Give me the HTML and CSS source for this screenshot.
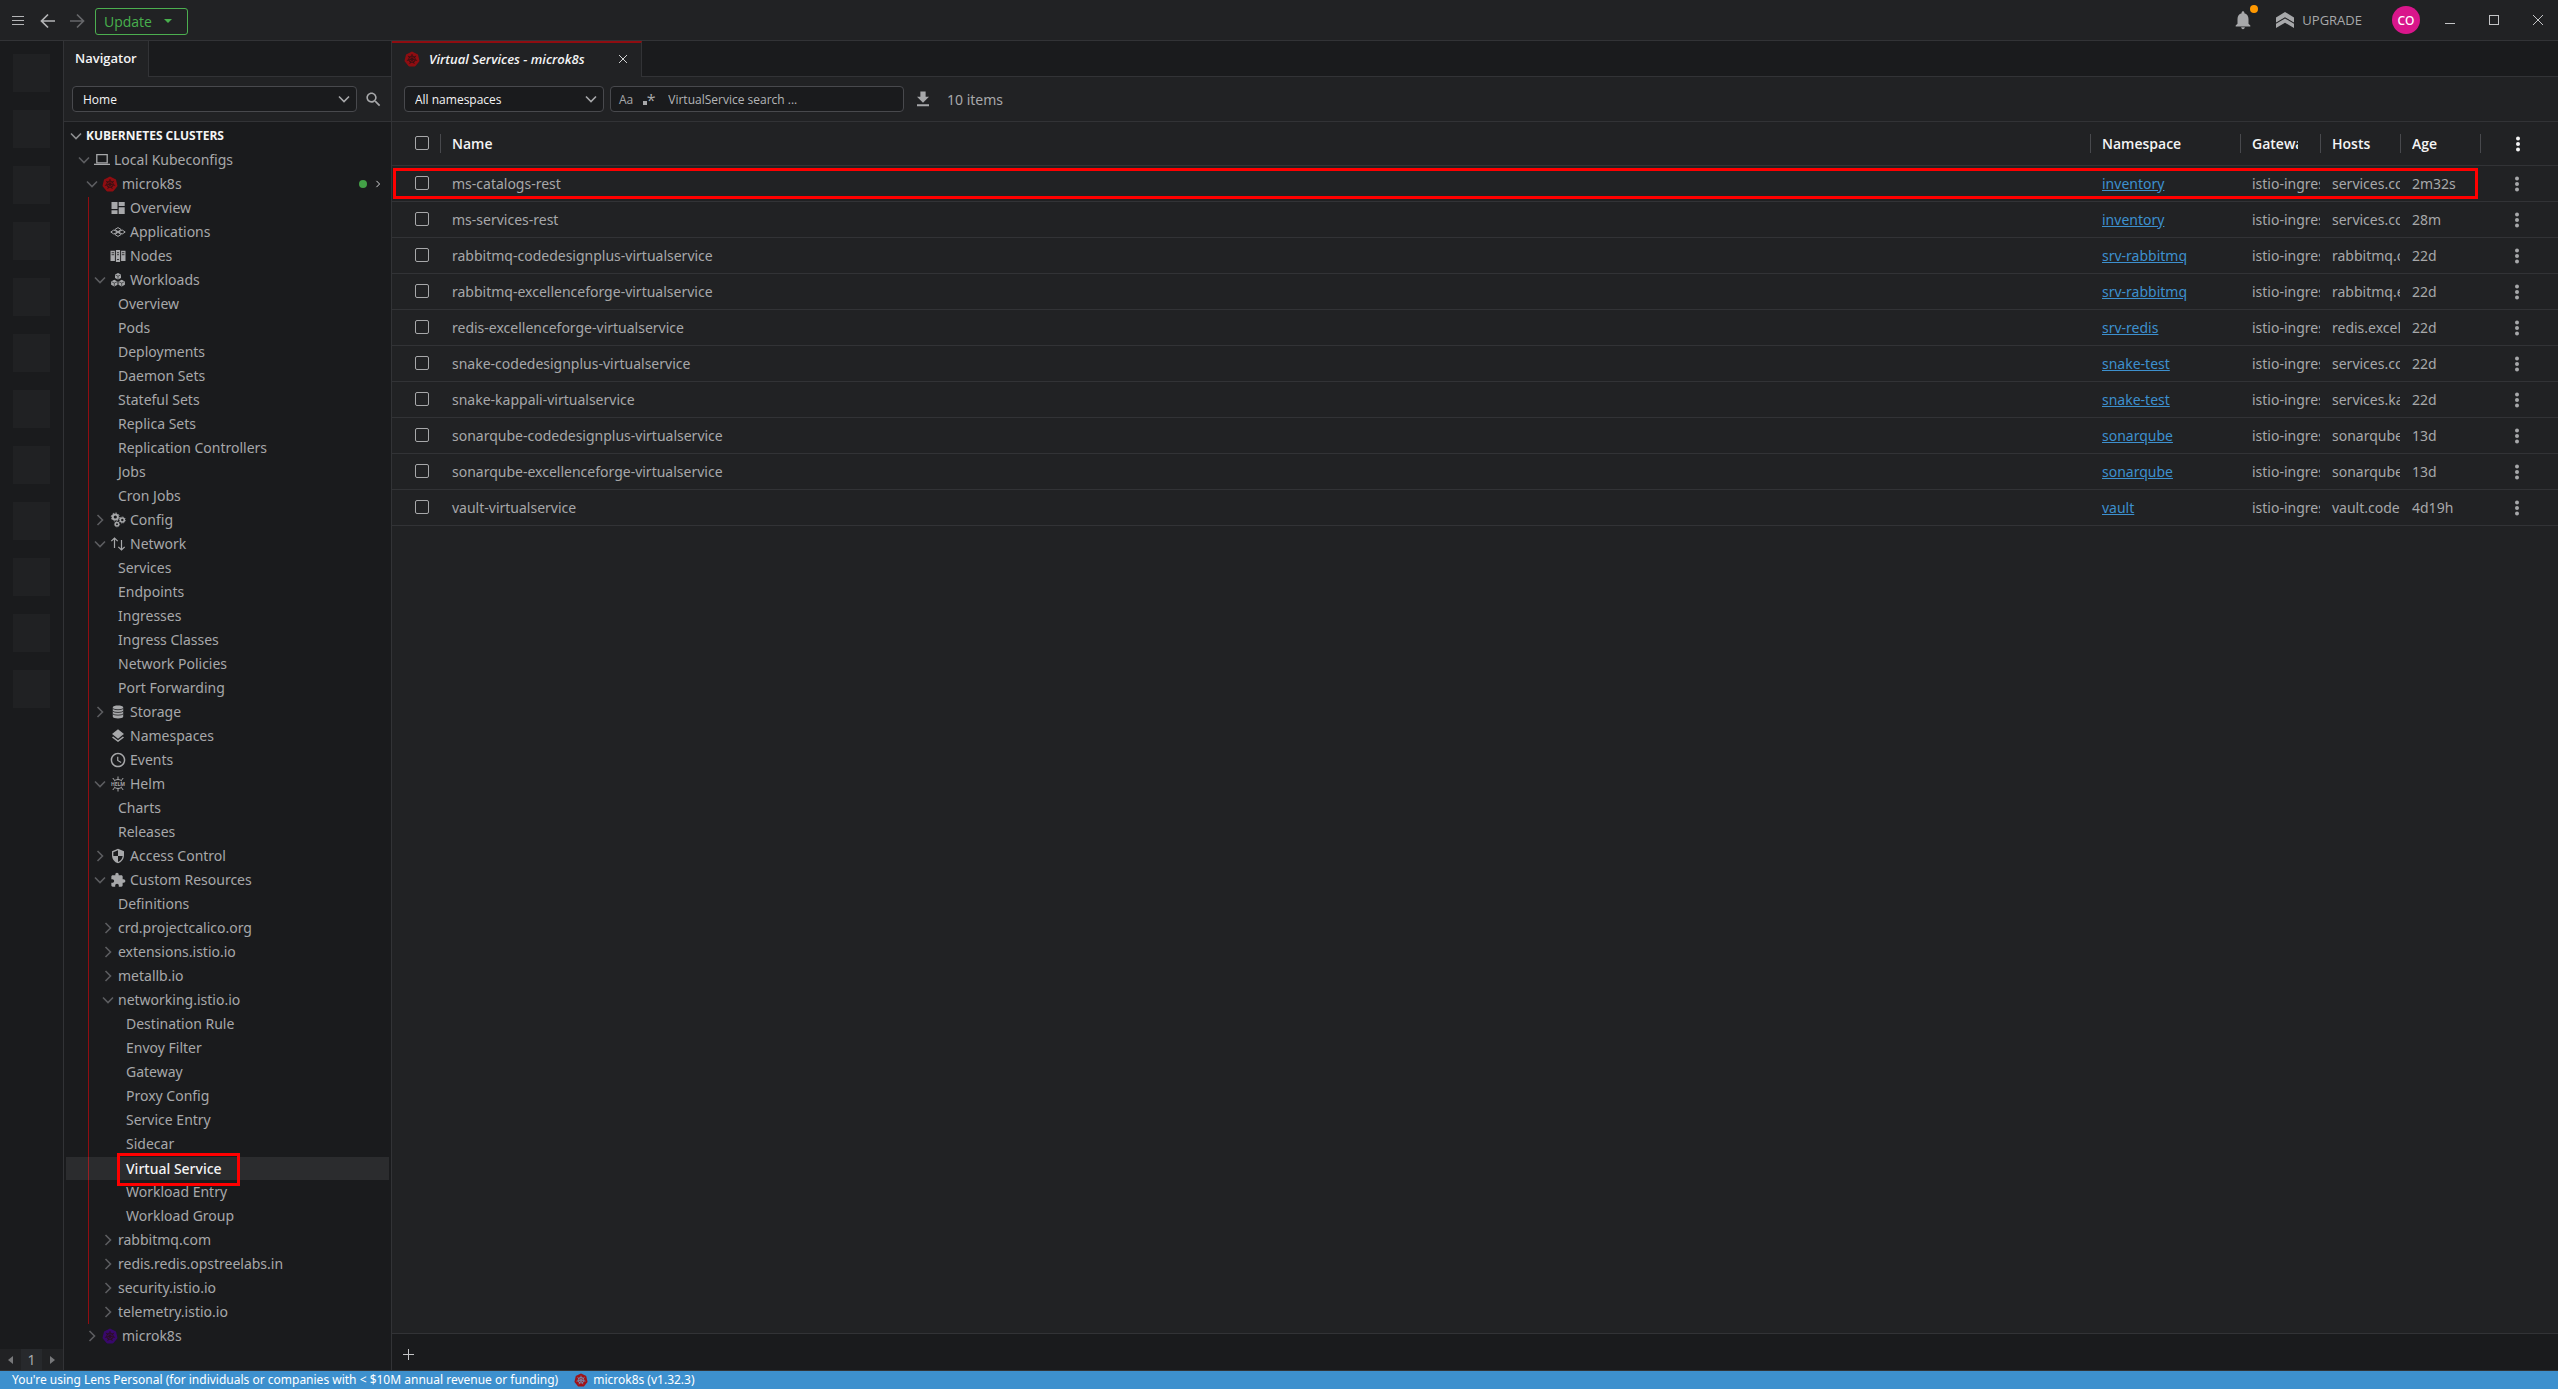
FILE: index.html
```html
<!DOCTYPE html>
<html lang="en">
<head>
    <meta charset="UTF-8">
    <meta name="viewport" content="width=device-width, initial-scale=1.0">
    <title>Virtual Services - microk8s</title>
    <link rel="stylesheet" href="styles.css">
</head>
<body>
    <!-- Icon sprite -->
    <svg class="sprite" aria-hidden="true">
        <symbol id="chevron-down" viewBox="0 0 16 16"><path d="M3 5.5l5 5 5-5" fill="none" stroke="currentColor" stroke-width="1.6"/></symbol>
        <symbol id="chevron-right" viewBox="0 0 16 16"><path d="M5.5 3l5 5-5 5" fill="none" stroke="currentColor" stroke-width="1.6"/></symbol>
        <symbol id="kube" viewBox="0 0 16 16">
            <path d="M8 .6l5.5 2.6c.3.2.5.4.6.8l1.3 5.6c.1.3 0 .7-.2.9l-3.700 4.500c-.2.3-.5.4-.9.400H5.400c-.4 0-.7-.1-.9-.4L.8 10.500c-.2-.2-.3-.6-.2-.9L1.900 4c.1-.4.3-.6.6-.8z" fill="currentColor"/>
            <g class="kube-wheel" fill="none" stroke-width=".8"><circle cx="8" cy="8.200" r="3.300"/><circle cx="8" cy="8.200" r=".8"/><path d="M8 7.400V3M8.600 7.700l3.500-2.800M8.800 8.400l4.300 1M8.400 8.900l1.900 4M7.600 8.900l-1.900 4M7.200 8.400l-4.300 1M7.400 7.700L3.900 4.900"/></g>
        </symbol>
        <symbol id="laptop" viewBox="0 0 16 16"><path d="M2.800 2.700h10.400v8.100H2.800z" fill="none" stroke="currentColor" stroke-width="1.300"/><path d="M0 11.700h16V13H0z" fill="currentColor"/></symbol>
        <symbol id="dashboard" viewBox="0 0 16 16"><path d="M1.500 2h6v7h-6zM8.700 2h6v4h-6zM1.500 10.200h6V14h-6zM8.700 7.200h6V14h-6z" fill="currentColor"/></symbol>
        <symbol id="apps" viewBox="0 0 16 16"><path d="M.8 8l3-2L8 8.200 12.200 6l3 2-3 2L8 7.800 3.800 10z" fill="none" stroke="currentColor"/><path d="M8 3.600l3.200 2L8 7.600l-3.200-2zM8 8.400l3.200 2L8 12.400l-3.200-2z" fill="none" stroke="currentColor"/></symbol>
        <symbol id="nodes" viewBox="0 0 16 16"><path d="M.5 2.700h4.700v10.200H.5zM5.700 2h4.600v12H5.700zM10.800 2.700h4.700v10.200h-4.700z" fill="currentColor"/><path d="M1.600 4.700h2.500M1.600 6.700h2.500M7 4.700h2M7 6.700h2M11.900 4.700h2.500M11.900 6.700h2.500M7 11.500h2M5.400 2v12M10.600 2v12" stroke="#1a1b1d" stroke-width=".8"/></symbol>
        <symbol id="workloads" viewBox="0 0 16 16"><path d="M8 1l3 1.600v3.300L8 7.600 5 5.900V2.600zM4.300 7.700l3.200 1.700v3.300l-3.200 1.700-3.200-1.700V9.400zM11.700 7.700l3.200 1.700v3.300l-3.200 1.700-3.200-1.700V9.400z" fill="currentColor"/><path d="M5.500 3L8 4.200 10.500 3M8 4.200v3M1.700 9.800l2.600 1.200L7 9.800M4.300 11v3M9 9.800l2.700 1.200 2.600-1.200M11.700 11v3" fill="none" stroke="#1a1b1d" stroke-width=".6"/></symbol>
        <symbol id="gears" viewBox="0 0 16 16"><g fill="none" stroke="currentColor"><circle cx="5.300" cy="5" r="2.600" stroke-width="2"/><circle cx="5.300" cy="5" r="4" stroke-width="1" stroke-dasharray="1.600 1.500"/><circle cx="12.300" cy="8" r="2" stroke-width="1.600"/><circle cx="12.300" cy="8" r="3" stroke-width=".9" stroke-dasharray="1.300 1"/><circle cx="7" cy="12.300" r="1.700" stroke-width="1.500"/><circle cx="7" cy="12.300" r="2.600" stroke-width=".8" stroke-dasharray="1.200 1"/></g></symbol>
        <symbol id="network" viewBox="0 0 16 16"><path d="M4.500 12V2M1.300 5.200L4.500 2l3.200 3.200M11.500 4v10M8.300 10.800l3.200 3.200 3.200-3.200" fill="none" stroke="currentColor" stroke-width="1.200"/></symbol>
        <symbol id="storage" viewBox="0 0 16 16"><path d="M2.800 3.300c0-2.300 10.400-2.300 10.400 0v9.400c0 2.300-10.400 2.300-10.400 0z" fill="currentColor"/><path d="M2.800 4.600c1.500 1.500 8.900 1.500 10.400 0M2.800 7.300c1.500 1.500 8.900 1.500 10.400 0M2.800 10c1.500 1.500 8.900 1.500 10.400 0" fill="none" stroke="#1a1b1d" stroke-width=".8"/></symbol>
        <symbol id="layers" viewBox="0 0 24 24"><path d="M11.990 18.540l-7.370-5.730L3 14.070l9 7 9-7-1.630-1.270zM12 16l7.360-5.730L21 9l-9-7-9 7 1.630 1.270z" fill="currentColor"/></symbol>
        <symbol id="clock" viewBox="0 0 24 24"><path d="M11.990 1C5.900 1 1 5.900 1 12s4.900 11 10.990 11C18.100 23 23 18.100 23 12S18.100 1 11.990 1zM12 20.700c-4.800 0-8.700-3.900-8.700-8.700s3.900-8.700 8.700-8.700 8.700 3.900 8.700 8.700-3.900 8.700-8.700 8.700zm.5-13.700H10.700v6l5.550 3.400.95-1.500-4.700-2.700z" fill="currentColor"/></symbol>
        <symbol id="helm" viewBox="0 0 16 16"><path d="M4 5.200c2-2.200 6-2.200 8 0M4 10.800c2 2.200 6 2.200 8 0M8 3.500V.5M8 12.500v3M4.700 4.500L2.800 2M11.300 4.500L13.200 2M4.700 11.500L2.800 14M11.300 11.500l1.900 2.500" fill="none" stroke="currentColor" stroke-width="1"/><text x="8" y="9.700" text-anchor="middle" class="helm-text">HELM</text></symbol>
        <symbol id="shield" viewBox="0 0 24 24"><path d="M12 1L3 5v6c0 5.550 3.840 10.740 9 12 5.160-1.260 9-6.450 9-12V5l-9-4zm0 10.990h7c-.53 4.120-3.280 7.790-7 8.940V12H5V6.300l7-3.110v8.800z" fill="currentColor"/></symbol>
        <symbol id="extension" viewBox="0 0 24 24"><path d="M20.500 11H19V7c0-1.100-.9-2-2-2h-4V3.500C13 2.120 11.880 1 10.500 1S8 2.120 8 3.500V5H4c-1.100 0-1.990.9-1.990 2v3.800H3.500c1.490 0 2.700 1.210 2.700 2.700s-1.210 2.700-2.700 2.700H2V20c0 1.100.9 2 2 2h3.800v-1.500c0-1.490 1.210-2.700 2.700-2.700 1.490 0 2.700 1.210 2.700 2.700V22H17c1.100 0 2-.9 2-2v-4h1.500c1.380 0 2.500-1.120 2.500-2.500S21.880 11 20.500 11z" fill="currentColor"/></symbol>
        <symbol id="search" viewBox="0 0 24 24"><path d="M15.500 14h-.79l-.28-.27C15.410 12.590 16 11.110 16 9.500 16 5.910 13.090 3 9.500 3S3 5.910 3 9.500 5.910 16 9.500 16c1.610 0 3.090-.59 4.230-1.570l.27.28v.79l5 4.990L20.490 19l-4.990-5zm-6 0C7.010 14 5 11.990 5 9.500S7.010 5 9.500 5 14 7.010 14 9.500 11.990 14 9.500 14z" fill="currentColor"/></symbol>
        <symbol id="arrow" viewBox="0 0 16 16"><path d="M15 8H1.500M8 1.500L1.500 8 8 14.500" fill="none" stroke="currentColor" stroke-width="1.700"/></symbol>
        <symbol id="bell" viewBox="0 0 24 24"><path d="M12 22c1.100 0 2-.9 2-2h-4c0 1.100.89 2 2 2zm6-6v-5c0-3.070-1.640-5.640-4.500-6.320V4c0-.83-.67-1.500-1.500-1.500s-1.500.67-1.500 1.500v.68C7.630 5.360 6 7.920 6 11v5l-2 2v1h16v-1l-2-2z" fill="currentColor"/></symbol>
        <symbol id="upgrade" viewBox="0 0 18 18"><path d="M9 1l9 5.500v5L9 6.200 0 11.500v-5zM9 7.500l9 5.300V17l-9-5.300L0 17v-4.200z" fill="currentColor"/><path d="M1 10.500V7L9 2l8 5v3.500L9 5.600z" fill="currentColor"/></symbol>
        <symbol id="download" viewBox="0 0 24 24"><path d="M20 9h-4.500V2h-7v7H4l8 8zM4 19v2.500h16V19z" fill="currentColor"/></symbol>
        <symbol id="kebab" viewBox="0 0 16 16"><g fill="currentColor"><circle cx="8" cy="2.500" r="2"/><circle cx="8" cy="8" r="2"/><circle cx="8" cy="13.500" r="2"/></g></symbol>
        <symbol id="close" viewBox="0 0 10 10"><path d="M0 0l10 10M10 0L0 10" fill="none" stroke="currentColor"/></symbol>
    </svg>

    <div class="app">
        <header class="titlebar">
            <button class="icon-btn menu-btn" aria-label="Menu"><span></span><span></span><span></span></button>
            <button class="icon-btn back-btn" aria-label="Back"><svg class="icon"><use href="#arrow"/></svg></button>
            <button class="icon-btn forward-btn" aria-label="Forward"><svg class="icon"><use href="#arrow"/></svg></button>
            <button class="update-btn">Update <span class="caret"></span></button>

            <div class="titlebar-right">
                <button class="icon-btn bell-btn" aria-label="Notifications"><svg class="icon"><use href="#bell"/></svg><span class="badge"></span></button>
                <button class="upgrade-btn"><svg class="icon"><use href="#upgrade"/></svg>UPGRADE</button>
                <button class="avatar">CO</button>
                <div class="window-controls">
                    <button class="icon-btn" aria-label="Minimize"><span class="minimize"></span></button>
                    <button class="icon-btn" aria-label="Maximize"><span class="maximize"></span></button>
                    <button class="icon-btn" aria-label="Close"><svg class="close-icon"><use href="#close"/></svg></button>
                </div>
            </div>
        </header>

        <div class="workspace">
            <aside class="hotbar">
                <div class="hotbar-items">
                    <span class="slot"></span><span class="slot"></span><span class="slot"></span><span class="slot"></span>
                    <span class="slot"></span><span class="slot"></span><span class="slot"></span><span class="slot"></span>
                    <span class="slot"></span><span class="slot"></span><span class="slot"></span><span class="slot"></span>
                </div>
                <div class="hotbar-pager">
                    <button class="icon-btn" aria-label="Previous"><span class="tri tri-left"></span></button>
                    <span class="page">1</span>
                    <button class="icon-btn" aria-label="Next"><span class="tri tri-right"></span></button>
                </div>
            </aside>

            <nav class="navigator">
                <div class="tabs"><a class="tab" href="#">Navigator</a></div>
                <div class="toolbar">
                    <div class="select nav-select">
                        <select aria-label="View"><option>Home</option></select>
                        <svg class="icon"><use href="#chevron-down"/></svg>
                    </div>
                    <button class="icon-btn search-btn" aria-label="Search"><svg class="icon"><use href="#search"/></svg></button>
                </div>

                <ul class="tree">
                    <li><a class="row l0" href="#"><svg class="icon toggle"><use href="#chevron-down"/></svg>KUBERNETES CLUSTERS</a></li>
                    <li><a class="row l1" href="#"><svg class="icon toggle"><use href="#chevron-down"/></svg><svg class="icon kind"><use href="#laptop"/></svg>Local Kubeconfigs</a></li>
                    <li>
                        <a class="row l2" href="#"><svg class="icon toggle"><use href="#chevron-down"/></svg><svg class="icon kind kube-red"><use href="#kube"/></svg>microk8s<span class="status-dot"></span><svg class="icon go"><use href="#chevron-right"/></svg></a>
                        <ul class="cluster">
                            <li><a class="row l3" href="#"><span class="toggle"></span><svg class="icon kind"><use href="#dashboard"/></svg>Overview</a></li>
                            <li><a class="row l3" href="#"><span class="toggle"></span><svg class="icon kind"><use href="#apps"/></svg>Applications</a></li>
                            <li><a class="row l3" href="#"><span class="toggle"></span><svg class="icon kind"><use href="#nodes"/></svg>Nodes</a></li>
                            <li><a class="row l3" href="#"><svg class="icon toggle"><use href="#chevron-down"/></svg><svg class="icon kind"><use href="#workloads"/></svg>Workloads</a></li>
                            <li><a class="row l4" href="#"><span class="toggle"></span>Overview</a></li>
                            <li><a class="row l4" href="#"><span class="toggle"></span>Pods</a></li>
                            <li><a class="row l4" href="#"><span class="toggle"></span>Deployments</a></li>
                            <li><a class="row l4" href="#"><span class="toggle"></span>Daemon Sets</a></li>
                            <li><a class="row l4" href="#"><span class="toggle"></span>Stateful Sets</a></li>
                            <li><a class="row l4" href="#"><span class="toggle"></span>Replica Sets</a></li>
                            <li><a class="row l4" href="#"><span class="toggle"></span>Replication Controllers</a></li>
                            <li><a class="row l4" href="#"><span class="toggle"></span>Jobs</a></li>
                            <li><a class="row l4" href="#"><span class="toggle"></span>Cron Jobs</a></li>
                            <li><a class="row l3" href="#"><svg class="icon toggle"><use href="#chevron-right"/></svg><svg class="icon kind"><use href="#gears"/></svg>Config</a></li>
                            <li><a class="row l3" href="#"><svg class="icon toggle"><use href="#chevron-down"/></svg><svg class="icon kind"><use href="#network"/></svg>Network</a></li>
                            <li><a class="row l4" href="#"><span class="toggle"></span>Services</a></li>
                            <li><a class="row l4" href="#"><span class="toggle"></span>Endpoints</a></li>
                            <li><a class="row l4" href="#"><span class="toggle"></span>Ingresses</a></li>
                            <li><a class="row l4" href="#"><span class="toggle"></span>Ingress Classes</a></li>
                            <li><a class="row l4" href="#"><span class="toggle"></span>Network Policies</a></li>
                            <li><a class="row l4" href="#"><span class="toggle"></span>Port Forwarding</a></li>
                            <li><a class="row l3" href="#"><svg class="icon toggle"><use href="#chevron-right"/></svg><svg class="icon kind"><use href="#storage"/></svg>Storage</a></li>
                            <li><a class="row l3" href="#"><span class="toggle"></span><svg class="icon kind"><use href="#layers"/></svg>Namespaces</a></li>
                            <li><a class="row l3" href="#"><span class="toggle"></span><svg class="icon kind"><use href="#clock"/></svg>Events</a></li>
                            <li><a class="row l3" href="#"><svg class="icon toggle"><use href="#chevron-down"/></svg><svg class="icon kind"><use href="#helm"/></svg>Helm</a></li>
                            <li><a class="row l4" href="#"><span class="toggle"></span>Charts</a></li>
                            <li><a class="row l4" href="#"><span class="toggle"></span>Releases</a></li>
                            <li><a class="row l3" href="#"><svg class="icon toggle"><use href="#chevron-right"/></svg><svg class="icon kind"><use href="#shield"/></svg>Access Control</a></li>
                            <li><a class="row l3" href="#"><svg class="icon toggle"><use href="#chevron-down"/></svg><svg class="icon kind"><use href="#extension"/></svg>Custom Resources</a></li>
                            <li><a class="row l4" href="#"><span class="toggle"></span>Definitions</a></li>
                            <li><a class="row l4" href="#"><svg class="icon toggle"><use href="#chevron-right"/></svg>crd.projectcalico.org</a></li>
                            <li><a class="row l4" href="#"><svg class="icon toggle"><use href="#chevron-right"/></svg>extensions.istio.io</a></li>
                            <li><a class="row l4" href="#"><svg class="icon toggle"><use href="#chevron-right"/></svg>metallb.io</a></li>
                            <li><a class="row l4" href="#"><svg class="icon toggle"><use href="#chevron-down"/></svg>networking.istio.io</a></li>
                            <li><a class="row l5" href="#"><span class="toggle"></span>Destination Rule</a></li>
                            <li><a class="row l5" href="#"><span class="toggle"></span>Envoy Filter</a></li>
                            <li><a class="row l5" href="#"><span class="toggle"></span>Gateway</a></li>
                            <li><a class="row l5" href="#"><span class="toggle"></span>Proxy Config</a></li>
                            <li><a class="row l5" href="#"><span class="toggle"></span>Service Entry</a></li>
                            <li><a class="row l5" href="#"><span class="toggle"></span>Sidecar</a></li>
                            <li class="selected"><a class="row l5" href="#" aria-current="page"><span class="toggle"></span>Virtual Service</a><span class="marker"></span></li>
                            <li><a class="row l5" href="#"><span class="toggle"></span>Workload Entry</a></li>
                            <li><a class="row l5" href="#"><span class="toggle"></span>Workload Group</a></li>
                            <li><a class="row l4" href="#"><svg class="icon toggle"><use href="#chevron-right"/></svg>rabbitmq.com</a></li>
                            <li><a class="row l4" href="#"><svg class="icon toggle"><use href="#chevron-right"/></svg>redis.redis.opstreelabs.in</a></li>
                            <li><a class="row l4" href="#"><svg class="icon toggle"><use href="#chevron-right"/></svg>security.istio.io</a></li>
                            <li><a class="row l4" href="#"><svg class="icon toggle"><use href="#chevron-right"/></svg>telemetry.istio.io</a></li>
                        </ul>
                    </li>
                    <li><a class="row l2" href="#"><svg class="icon toggle"><use href="#chevron-right"/></svg><svg class="icon kind kube-purple"><use href="#kube"/></svg>microk8s</a></li>
                </ul>
            </nav>

            <main class="main">
                <div class="tabs">
                    <div class="tab doc-tab">
                        <svg class="icon kube-red"><use href="#kube"/></svg>
                        <span class="doc-title">Virtual Services - microk8s</span>
                        <button class="icon-btn tab-close" aria-label="Close tab"><svg><use href="#close"/></svg></button>
                    </div>
                </div>
                <div class="toolbar main-toolbar">
                    <div class="select ns-select">
                        <select aria-label="Namespaces"><option>All namespaces</option></select>
                        <svg class="icon"><use href="#chevron-down"/></svg>
                    </div>
                    <div class="search-box">
                        <button class="icon-btn case-btn" aria-label="Match case">Aa</button>
                        <button class="icon-btn regex-btn" aria-label="Use regular expression"><span class="regex-dot"></span><span class="regex-star">*</span></button>
                        <input type="text" placeholder="VirtualService search ..." aria-label="VirtualService search">
                    </div>
                    <button class="icon-btn download-btn" aria-label="Download"><svg class="icon"><use href="#download"/></svg></button>
                    <span class="count">10 items</span>
                </div>

                <div class="table-wrap">
                    <table class="resources">
                        <colgroup>
                            <col class="col-check"><col><col class="col-ns"><col class="col-sm"><col class="col-sm"><col class="col-sm"><col class="col-menu">
                        </colgroup>
                        <thead>
                            <tr>
                                <th class="check"><input type="checkbox" aria-label="Select all"></th>
                                <th><div class="label"><span>Name</span></div></th>
                                <th><div class="label"><span>Namespace</span></div></th>
                                <th><div class="label"><span>Gateways</span></div></th>
                                <th><div class="label"><span>Hosts</span></div></th>
                                <th><div class="label"><span>Age</span></div></th>
                                <th class="menu"><div class="label"><button class="icon-btn" aria-label="Columns"><svg class="icon"><use href="#kebab"/></svg></button></div></th>
                            </tr>
                        </thead>
                        <tbody>
                            <tr><td class="check"><input type="checkbox" aria-label="ms-catalogs-rest"></td><td>ms-catalogs-rest</td><td><a href="#">inventory</a></td><td>istio-ingress</td><td>services.codedesignplus.com</td><td>2m32s</td><td class="menu"><button class="icon-btn" aria-label="Actions"><svg class="icon"><use href="#kebab"/></svg></button></td></tr>
                            <tr><td class="check"><input type="checkbox" aria-label="ms-services-rest"></td><td>ms-services-rest</td><td><a href="#">inventory</a></td><td>istio-ingress</td><td>services.codedesignplus.com</td><td>28m</td><td class="menu"><button class="icon-btn" aria-label="Actions"><svg class="icon"><use href="#kebab"/></svg></button></td></tr>
                            <tr><td class="check"><input type="checkbox" aria-label="rabbitmq-codedesignplus-virtualservice"></td><td>rabbitmq-codedesignplus-virtualservice</td><td><a href="#">srv-rabbitmq</a></td><td>istio-ingress</td><td>rabbitmq.codedesignplus.com</td><td>22d</td><td class="menu"><button class="icon-btn" aria-label="Actions"><svg class="icon"><use href="#kebab"/></svg></button></td></tr>
                            <tr><td class="check"><input type="checkbox" aria-label="rabbitmq-excellenceforge-virtualservice"></td><td>rabbitmq-excellenceforge-virtualservice</td><td><a href="#">srv-rabbitmq</a></td><td>istio-ingress</td><td>rabbitmq.excellenceforge.com</td><td>22d</td><td class="menu"><button class="icon-btn" aria-label="Actions"><svg class="icon"><use href="#kebab"/></svg></button></td></tr>
                            <tr><td class="check"><input type="checkbox" aria-label="redis-excellenceforge-virtualservice"></td><td>redis-excellenceforge-virtualservice</td><td><a href="#">srv-redis</a></td><td>istio-ingress</td><td>redis.excellenceforge.com</td><td>22d</td><td class="menu"><button class="icon-btn" aria-label="Actions"><svg class="icon"><use href="#kebab"/></svg></button></td></tr>
                            <tr><td class="check"><input type="checkbox" aria-label="snake-codedesignplus-virtualservice"></td><td>snake-codedesignplus-virtualservice</td><td><a href="#">snake-test</a></td><td>istio-ingress</td><td>services.codedesignplus.com</td><td>22d</td><td class="menu"><button class="icon-btn" aria-label="Actions"><svg class="icon"><use href="#kebab"/></svg></button></td></tr>
                            <tr><td class="check"><input type="checkbox" aria-label="snake-kappali-virtualservice"></td><td>snake-kappali-virtualservice</td><td><a href="#">snake-test</a></td><td>istio-ingress</td><td>services.kappali.com</td><td>22d</td><td class="menu"><button class="icon-btn" aria-label="Actions"><svg class="icon"><use href="#kebab"/></svg></button></td></tr>
                            <tr><td class="check"><input type="checkbox" aria-label="sonarqube-codedesignplus-virtualservice"></td><td>sonarqube-codedesignplus-virtualservice</td><td><a href="#">sonarqube</a></td><td>istio-ingress</td><td>sonarqube.codedesignplus.com</td><td>13d</td><td class="menu"><button class="icon-btn" aria-label="Actions"><svg class="icon"><use href="#kebab"/></svg></button></td></tr>
                            <tr><td class="check"><input type="checkbox" aria-label="sonarqube-excellenceforge-virtualservice"></td><td>sonarqube-excellenceforge-virtualservice</td><td><a href="#">sonarqube</a></td><td>istio-ingress</td><td>sonarqube.excellenceforge.com</td><td>13d</td><td class="menu"><button class="icon-btn" aria-label="Actions"><svg class="icon"><use href="#kebab"/></svg></button></td></tr>
                            <tr><td class="check"><input type="checkbox" aria-label="vault-virtualservice"></td><td>vault-virtualservice</td><td><a href="#">vault</a></td><td>istio-ingress</td><td>vault.codedesignplus.com</td><td>4d19h</td><td class="menu"><button class="icon-btn" aria-label="Actions"><svg class="icon"><use href="#kebab"/></svg></button></td></tr>
                        </tbody>
                    </table>
                    <span class="row-marker"></span>
                </div>

                <div class="dock"><button class="icon-btn add-btn" aria-label="New tab"></button></div>
            </main>
        </div>

        <footer class="statusbar">
            <span>You're using Lens Personal (for individuals or companies with &lt; $10M annual revenue or funding)</span>
            <span class="status-cluster"><svg class="icon kube-red"><use href="#kube"/></svg>microk8s (v1.32.3)</span>
        </footer>
    </div>
</body>
</html>
```
FILE: styles.css
```css
:root {
    --bg: #212224;
    --bg-dark: #1a1b1d;
    --border: #323336;
    --text: #a7a8aa;
    --text-bright: #f4f4f5;
    --blue: #3d90ce;
    --red: #8f0d11;
    --marker: #ff0000;
}

* {
    margin: 0;
    padding: 0;
    box-sizing: border-box;
}

body {
    font-family: 'Noto Sans', 'Open Sans', sans-serif;
    font-size: 14px;
    color: var(--text);
    background: var(--bg);
    overflow: hidden;
}

a {
    color: inherit;
    text-decoration: none;
}

ul {
    list-style: none;
}

button,
input,
select {
    font: inherit;
    color: inherit;
    background: none;
    border: none;
}

.sprite {
    display: none;
}

.icon {
    width: 16px;
    height: 16px;
    flex: none;
    display: block;
}

.icon-btn {
    display: flex;
    align-items: center;
    justify-content: center;
    flex: none;
}

.kube-red { color: var(--red); }
.kube-purple { color: #38086b; }
.kube-wheel { stroke: var(--wheel, #2a1013); }
.helm-text {
    font: 700 5px 'Open Sans', sans-serif;
    fill: currentColor;
}

.app {
    height: 100vh;
    display: flex;
    flex-direction: column;
}

/* Title bar */
.titlebar {
    display: flex;
    align-items: center;
    height: 41px;
    padding: 0 10px 0 12px;
    border-bottom: 1px solid var(--border);
}

.menu-btn {
    flex-direction: column;
    gap: 3px;
    width: 12px;
    margin-right: 16px;
}

.menu-btn span {
    width: 12px;
    height: 1px;
    background: #b4b5b7;
}

.back-btn,
.forward-btn {
    margin-right: 13px;
    padding-top: 2px;
    color: #b4b5b7;
}

.forward-btn {
    margin-right: 10px;
    color: #66676a;
}

.forward-btn .icon {
    transform: scaleX(-1);
}

.update-btn {
    display: flex;
    align-items: center;
    gap: 12px;
    height: 27px;
    padding: 0 15px 0 8px;
    margin-top: 2px;
    font-family: 'Open Sans', sans-serif;
    color: #48b04d;
    border: 1px solid #4caf50;
    border-radius: 3px;
}

.caret {
    border: 4px solid transparent;
    border-top-color: currentColor;
    border-bottom: none;
}

.titlebar-right {
    display: flex;
    align-items: center;
    margin-left: auto;
}

.bell-btn {
    position: relative;
    margin-right: 22px;
}

.bell-btn .icon {
    width: 22px;
    height: 22px;
}

.badge {
    position: absolute;
    top: -4px;
    right: -4px;
    width: 8px;
    height: 8px;
    border-radius: 50%;
    background: #ff9800;
}

.upgrade-btn {
    display: flex;
    align-items: center;
    gap: 8px;
    margin-right: 30px;
    font-family: 'Open Sans', sans-serif;
    font-size: 13px;
}

.upgrade-btn .icon {
    width: 18px;
    height: 18px;
}

.avatar {
    width: 28px;
    height: 28px;
    border-radius: 50%;
    background: #d9168b;
    color: #fff;
    font-size: 12px;
    font-weight: 500;
    margin-right: 20px;
}

.window-controls {
    display: flex;
    gap: 24px;
    color: #c4c5c7;
}

.window-controls .icon-btn {
    width: 20px;
    height: 20px;
}

.minimize {
    width: 10px;
    height: 1px;
    margin-top: 7px;
    background: currentColor;
}

.maximize {
    width: 10px;
    height: 10px;
    border: 1px solid currentColor;
}

.close-icon {
    width: 10px;
    height: 10px;
}

.workspace {
    flex: 1;
    min-height: 0;
    display: flex;
    border-bottom: 1px solid var(--border);
}

/* Hotbar */
.hotbar {
    width: 64px;
    flex: none;
    display: flex;
    flex-direction: column;
    justify-content: space-between;
    background: var(--bg-dark);
    border-right: 1px solid var(--border);
}

.hotbar-items {
    display: flex;
    flex-direction: column;
    align-items: center;
    gap: 18px;
    padding-top: 13px;
}

.slot {
    width: 37px;
    height: 38px;
    background: #202123;
}

.hotbar-pager {
    display: grid;
    grid-template-columns: 1fr 1fr 1fr;
    height: 21px;
    line-height: 21px;
    text-align: center;
    background: var(--bg);
}

.page {
    background: #27292c;
}

.tri {
    border: 4px solid transparent;
}

.tri-left {
    border-right: 5px solid #77787a;
    border-left: none;
}

.tri-right {
    border-left: 5px solid #77787a;
    border-right: none;
}

/* Shared tab strip and toolbar */
.tabs {
    display: flex;
    height: 36px;
    flex: none;
    background: linear-gradient(var(--border), var(--border)) bottom / 100% 1px no-repeat var(--bg-dark);
}

.tab {
    display: flex;
    align-items: center;
    padding: 0 11px 2px;
    font-family: 'Open Sans', sans-serif;
    font-size: 13px;
    font-weight: 600;
    color: var(--text-bright);
    background: var(--bg);
    border-right: 1px solid var(--border);
}

.toolbar {
    display: flex;
    align-items: center;
    height: 45px;
    flex: none;
    padding: 0 8px;
    background: var(--bg);
    border-bottom: 1px solid var(--border);
}

.select {
    position: relative;
}

.select select {
    width: 100%;
    height: 26px;
    padding: 0 28px 0 10px;
    appearance: none;
    color: var(--text-bright);
    background: var(--bg-dark);
    border: 1px solid #48494d;
    border-radius: 4px;
    font-family: 'Open Sans', sans-serif;
    font-size: 12px;
    font-weight: 500;
}

.select .icon {
    position: absolute;
    right: 5px;
    top: 5px;
    pointer-events: none;
}

/* Navigator */
.navigator {
    width: 328px;
    flex: none;
    background: var(--bg-dark);
    border-right: 1px solid var(--border);
}

.nav-select {
    flex: 1;
}

.search-btn {
    margin-left: 7px;
}

.search-btn .icon {
    width: 19px;
    height: 19px;
}

.tree {
    padding: 2px;
}

.row {
    display: flex;
    align-items: center;
    height: 24px;
    line-height: 24px;
    white-space: nowrap;
}

.toggle {
    width: 16px;
    margin-right: 2px;
    flex: none;
    color: #5c5d60;
}

.kind {
    margin-right: 4px;
}

.l0 {
    padding-left: 2px;
    font-family: 'Open Sans', sans-serif;
    font-size: 12px;
    font-weight: 700;
    color: var(--text-bright);
}

.l0 .toggle { color: #8d8e90; }
.l1 { padding-left: 10px; }
.l2 { padding-left: 18px; }
.l3 { padding-left: 26px; }
.l4 { padding-left: 34px; }
.l5 { padding-left: 42px; }

.status-dot {
    width: 8px;
    height: 8px;
    margin-left: auto;
    border-radius: 50%;
    background: #43a047;
}

.go {
    width: 10px;
    height: 10px;
    margin: 0 6px;
    color: #d4d5d7;
}

.cluster {
    position: relative;
}

/* Cluster colour line down the open branch */
.cluster::before {
    content: '';
    position: absolute;
    left: 22px;
    top: 1px;
    bottom: 0;
    width: 1px;
    background: var(--red);
}

.selected {
    position: relative;
    padding-top: 1px;
    background: rgba(255, 255, 255, 0.08);
    background-clip: content-box;
}

.selected .row {
    height: 23px;
    line-height: 23px;
    color: var(--text-bright);
    font-weight: 500;
}

.marker {
    position: absolute;
    left: 51px;
    top: -3px;
    width: 123px;
    height: 33px;
    border: 3px solid var(--marker);
    z-index: 1;
}

/* Main area */
.main {
    flex: 1;
    min-width: 0;
    display: flex;
    flex-direction: column;
}

.doc-tab {
    width: 250px;
    padding-left: 12px;
    border-top: 2px solid var(--red);
    font-style: italic;
}

.doc-title {
    margin-left: 9px;
    white-space: nowrap;
}

.tab-close {
    margin: 0 3px 0 auto;
    color: #fff;
}

.tab-close svg {
    width: 8px;
    height: 8px;
}

.main-toolbar {
    padding-left: 12px;
    gap: 6px;
}

.ns-select {
    width: 200px;
}

.search-box {
    display: flex;
    align-items: center;
    width: 294px;
    height: 26px;
    padding: 0 10px 0 8px;
    background: var(--bg-dark);
    border: 1px solid #48494d;
    border-radius: 4px;
    font-family: 'Open Sans', sans-serif;
    font-size: 12px;
}

.regex-btn {
    width: 14px;
    height: 18px;
    margin: 0 12px 0 9px;
    align-items: stretch;
}

.regex-dot {
    width: 4px;
    height: 4px;
    margin-bottom: 3px;
    align-self: flex-end;
    background: currentColor;
}

.regex-star {
    font-size: 16px;
    line-height: 20px;
}

.search-box input {
    flex: 1;
    min-width: 0;
    font-weight: 500;
    outline: none;
}

.search-box input::placeholder {
    color: #b4b5b7;
}

.download-btn {
    margin-left: 4px;
}

.download-btn .icon {
    width: 18px;
    height: 18px;
}

.count {
    margin-left: 9px;
}

.table-wrap {
    position: relative;
    flex: 1;
    min-height: 0;
}

.resources {
    width: 100%;
    table-layout: fixed;
    border-collapse: separate;
    border-spacing: 0;
}

.col-check { width: 48px; }
.col-ns { width: 150px; }
.col-sm { width: 80px; }
.col-menu { width: 78px; }

.resources th {
    height: 44px;
    text-align: left;
    font-family: 'Open Sans', sans-serif;
    font-weight: 600;
    color: var(--text-bright);
    border-bottom: 1px solid var(--border);
}

.resources .label {
    height: 19px;
    line-height: 19px;
    padding: 0 22px 0 11px;
    border-left: 1px solid #48494d;
}

.resources .label span {
    display: block;
    overflow: hidden;
    white-space: nowrap;
}

.resources td {
    height: 36px;
    padding-left: 12px;
    line-height: 20px;
    overflow: hidden;
    white-space: nowrap;
    border-bottom: 1px solid var(--border);
}

.resources td a {
    color: var(--blue);
    text-decoration: underline;
}

.resources .check {
    padding-left: 23px;
    padding-bottom: 2px;
}

.resources input {
    display: block;
    width: 14px;
    height: 14px;
    appearance: none;
    border: 1px solid #a7a8aa;
    border-radius: 2px;
}

.resources .menu {
    padding: 0 4px 0 0;
}

.resources .menu .icon-btn {
    width: 100%;
    height: 19px;
}

.resources .menu .label {
    padding: 0;
}

/* Outline round the newest resource */
.row-marker {
    position: absolute;
    left: 1px;
    right: 80px;
    top: 46px;
    height: 31px;
    border: 3px solid var(--marker);
    pointer-events: none;
}

.dock {
    display: flex;
    align-items: center;
    height: 37px;
    flex: none;
    padding: 4px 11px 0;
    background: var(--bg-dark);
    border-top: 1px solid var(--border);
}

.add-btn {
    width: 11px;
    height: 11px;
    background:
        linear-gradient(#c4c5c7, #c4c5c7) center / 11px 1px no-repeat,
        linear-gradient(#c4c5c7, #c4c5c7) center / 1px 11px no-repeat;
}

.statusbar {
    display: flex;
    align-items: center;
    gap: 16px;
    height: 18px;
    flex: none;
    padding: 0 12px;
    font-size: 12px;
    line-height: 18px;
    color: #fff;
    background: var(--blue);
}

.status-cluster {
    display: flex;
    align-items: center;
    gap: 5px;
}

.statusbar .icon {
    width: 14px;
    height: 14px;
}

.statusbar .kube-red {
    --wheel: #6fa3cf;
    color: #a11217;
}
```
